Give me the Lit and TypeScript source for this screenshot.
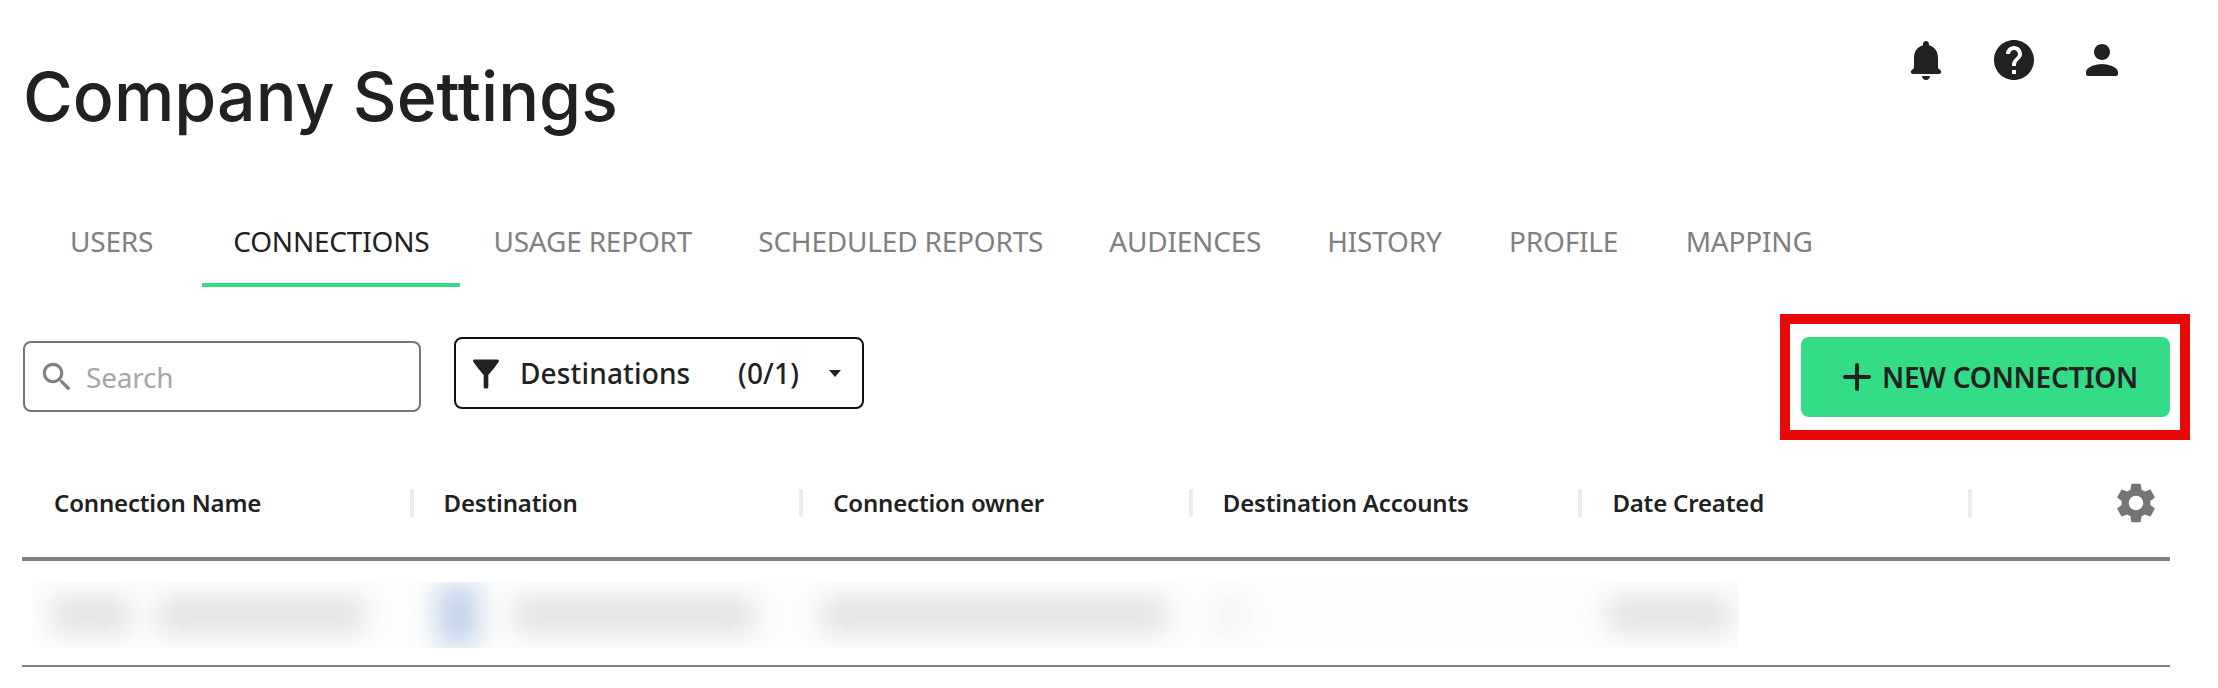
import { LitElement, html, css, svg } from "lit";
import { customElement } from "lit/decorators.js";

const icon = (size: number, d: ReturnType<typeof svg>, cls = "") => html`<svg class=${cls} width=${size} height=${size} viewBox="0 0 24 24" fill="currentColor">${d}</svg>`;

@customElement("app-root")
export class AppRoot extends LitElement {
  static styles = css`
    :host { display: block; width: 2218px; height: 688px; overflow: hidden; background: #fff; color: #212121; font-family: "Noto Sans", "Open Sans", sans-serif; }
    .head { display: flex; justify-content: space-between; align-items: flex-start; padding: 36px 92px 0 23px; height: 199px; box-sizing: border-box; }
    h1 { margin: 0; padding-top: 16px; font: 500 68px/88px Inter, "Liberation Sans", sans-serif; color: #212121; }
    .icons { display: flex; gap: 40px; }
    .icons svg { display: block; }
    .tabs { display: flex; height: 88px; padding-left: 39px; box-sizing: border-box; }
    .tab { padding: 0 33px; height: 88px; box-sizing: border-box; border-bottom: 4px solid transparent; font-size: 28px; line-height: 84px; color: #808080; letter-spacing: -0.2px; white-space: nowrap; }
    .tab.on { padding: 0 31px; color: #212121; border-bottom-color: #34dc88; }
    .tab.first { padding: 0 31px; margin-right: 18px; }
    .tab.wide { margin-right: 1.5px; }
    .bar { display: flex; align-items: flex-start; padding: 50px 48px 0 23px; height: 194px; box-sizing: border-box; }
    .search { width: 398px; height: 71px; margin-top: 4px; border: 2px solid #757575; border-radius: 8px; box-sizing: border-box; display: flex; align-items: center; padding-left: 13px; gap: 10px; color: #808080; font-size: 28px; letter-spacing: -0.2px; }
    .search span { color: #a6a6a6; }
    .filter { margin-left: 33px; width: 410px; height: 72px; border: 2px solid #111; border-radius: 8px; box-sizing: border-box; display: flex; align-items: center; padding: 0 0 0 10px; font-size: 28px; font-weight: 500; letter-spacing: 0.15px; }
    .filter .name { margin-left: 14px; width: 218px; }
    .filter .caret { width: 0; height: 0; margin-left: 30px; border: 6.5px solid transparent; border-top: 7px solid #212121; border-bottom: 0; }
    .cta { position: relative; margin-left: auto; width: 369px; height: 80px; border-radius: 8px; background: #34dc88; display: flex; align-items: center; padding-left: 32px; box-sizing: border-box; gap: 1px; font-size: 28px; font-weight: 600; letter-spacing: -0.25px; white-space: nowrap; }
    .cta::after { content: ""; position: absolute; inset: -23px -20px -23px -21px; border: 10px solid #e80808; }
    .table { margin: 0 48px 0 22px; }
    .thead { display: grid; grid-template-columns: 391.6px repeat(4, 389.6px) 1fr; height: 76px; border-bottom: 4px solid #808080; align-items: start; }
    .th { height: 28px; margin-top: 8px; padding-left: 30px; border-right: 4px solid #ececec; font-size: 24px; line-height: 28px; font-weight: 600; letter-spacing: -0.18px; white-space: nowrap; box-sizing: border-box; }
    .th:first-child { padding-left: 32px; }
    .gear { justify-self: end; margin: -2px 10px 0 0; color: #757575; }
    .row { height: 106px; border-bottom: 2px solid #808080; box-sizing: border-box; padding: 21px 0 0 10px; }
    .blurbox { width: 1707px; height: 66px; overflow: hidden; background: #fdfdfd; display: flex; align-items: center; }
    .b { height: 32px; background: #dedede; filter: blur(14px); flex: none; border-radius: 4px; }
    .b1 { width: 78px; margin-left: 20px; }
    .b2 { width: 206px; margin-left: 28px; }
    .b3 { width: 40px; height: 60px; margin-left: 74px; background: #bccfe8; }
    .b4 { width: 240px; margin-left: 36px; }
    .b5 { width: 344px; margin-left: 68px; }
    .b6 { width: 28px; margin-left: 50px; background: #f0f0f0; }
    .b7 { width: 122px; margin-left: 364px; }
  `;

  render() {
    const tabs = ["USAGE REPORT", "SCHEDULED REPORTS", "AUDIENCES"];
    return html`
      <div class="head">
        <h1>Company Settings</h1>
        <div class="icons">
          ${icon(48, svg`<path d="M12 22c1.1 0 2-.9 2-2h-4c0 1.1.9 2 2 2zm6-6v-5c0-3.07-1.63-5.64-4.5-6.32V4c0-.83-.67-1.5-1.5-1.5s-1.5.67-1.5 1.5v.68C7.64 5.36 6 7.92 6 11v5l-1.29 1.29c-.63.63-.19 1.71.7 1.71h13.17c.89 0 1.34-1.08.71-1.71L18 16z"/>`)}
          ${icon(48, svg`<path d="M12 2C6.48 2 2 6.48 2 12s4.48 10 10 10 10-4.48 10-10S17.52 2 12 2zm1 17h-2v-2h2v2zm2.07-7.75l-.9.92C13.45 12.9 13 13.5 13 15h-2v-.5c0-1.1.45-2.1 1.17-2.83l1.24-1.26c.37-.36.59-.86.59-1.41 0-1.1-.9-2-2-2s-2 .9-2 2H8c0-2.21 1.79-4 4-4s4 1.79 4 4c0 .88-.36 1.68-.93 2.25z"/>`)}
          ${icon(48, svg`<path d="M12 12c2.21 0 4-1.79 4-4s-1.79-4-4-4-4 1.79-4 4 1.79 4 4 4zm0 2c-2.67 0-8 1.34-8 4v1c0 .55.45 1 1 1h14c.55 0 1-.45 1-1v-1c0-2.66-5.33-4-8-4z"/>`)}
        </div>
      </div>
      <div class="tabs">
        <div class="tab first">USERS</div>
        <div class="tab on">CONNECTIONS</div>
        ${tabs.map((t) => html`<div class="tab">${t}</div>`)}
        <div class="tab wide">HISTORY</div>
        <div class="tab wide">PROFILE</div>
        <div class="tab">MAPPING</div>
      </div>
      <div class="bar">
        <div class="search">
          ${icon(38, svg`<path d="M15.5 14h-.79l-.28-.27C15.41 12.59 16 11.11 16 9.5 16 5.91 13.09 3 9.5 3S3 5.91 3 9.5 5.91 16 9.5 16c1.61 0 3.09-.59 4.23-1.57l.27.28v.79l5 4.99L20.49 19l-4.99-5zm-6 0C7.01 14 5 11.99 5 9.5S7.01 5 9.5 5 14 7.01 14 9.5 11.99 14 9.5 14z"/>`)}
          <span>Search</span>
        </div>
        <div class="filter">
          ${icon(40, svg`<path d="M4.4 5.2C5.9 7.6 10 12.4 10.6 13.2v7.2c0 .5.4.9.8.9h1.2c.4 0 .8-.4.8-.9v-7.2C14 12.4 18.1 7.6 19.6 5.2c.4-.6 0-1.3-.7-1.3H5.1c-.7 0-1.1.7-.7 1.3z"/>`)}
          <span class="name">Destinations</span>
          <span>(0/1)</span>
          <span class="caret"></span>
        </div>
        <div class="cta">
          ${icon(48, svg`<path d="M18 13h-5v5c0 .55-.45 1-1 1s-1-.45-1-1v-5H6c-.55 0-1-.45-1-1s.45-1 1-1h5V6c0-.55.45-1 1-1s1 .45 1 1v5h5c.55 0 1 .45 1 1s-.45 1-1 1z"/>`)}
          <span>NEW CONNECTION</span>
        </div>
      </div>
      <div class="table">
        <div class="thead">
          <div class="th">Connection Name</div>
          <div class="th">Destination</div>
          <div class="th">Connection owner</div>
          <div class="th">Destination Accounts</div>
          <div class="th">Date Created</div>
          ${icon(48, svg`<path d="M19.14 12.94c.04-.3.06-.61.06-.94 0-.32-.02-.64-.07-.94l2.03-1.58c.18-.14.23-.41.12-.61l-1.92-3.32c-.12-.22-.37-.29-.59-.22l-2.39.96c-.5-.38-1.03-.7-1.62-.94l-.36-2.54c-.04-.24-.24-.41-.48-.41h-3.84c-.24 0-.43.17-.47.41l-.36 2.54c-.59.24-1.13.57-1.62.94l-2.39-.96c-.22-.08-.47 0-.59.22L2.74 8.87c-.12.21-.08.47.12.61l2.03 1.58c-.05.3-.09.63-.09.94s.02.64.07.94l-2.03 1.58c-.18.14-.23.41-.12.61l1.92 3.32c.12.22.37.29.59.22l2.39-.96c.5.38 1.03.7 1.62.94l.36 2.54c.05.24.24.41.48.41h3.84c.24 0 .44-.17.47-.41l.36-2.54c.59-.24 1.13-.56 1.62-.94l2.39.96c.22.08.47 0 .59-.22l1.92-3.32c.12-.22.07-.47-.12-.61l-2.01-1.58zM12 15.6c-1.98 0-3.6-1.62-3.6-3.6s1.62-3.6 3.6-3.6 3.6 1.62 3.6 3.6-1.62 3.6-3.6 3.6z"/>`, "gear")}
        </div>
        <div class="row">
          <div class="blurbox">
            <div class="b b1"></div><div class="b b2"></div><div class="b b3"></div><div class="b b4"></div><div class="b b5"></div><div class="b b6"></div><div class="b b7"></div>
          </div>
        </div>
      </div>
    `;
  }
}
